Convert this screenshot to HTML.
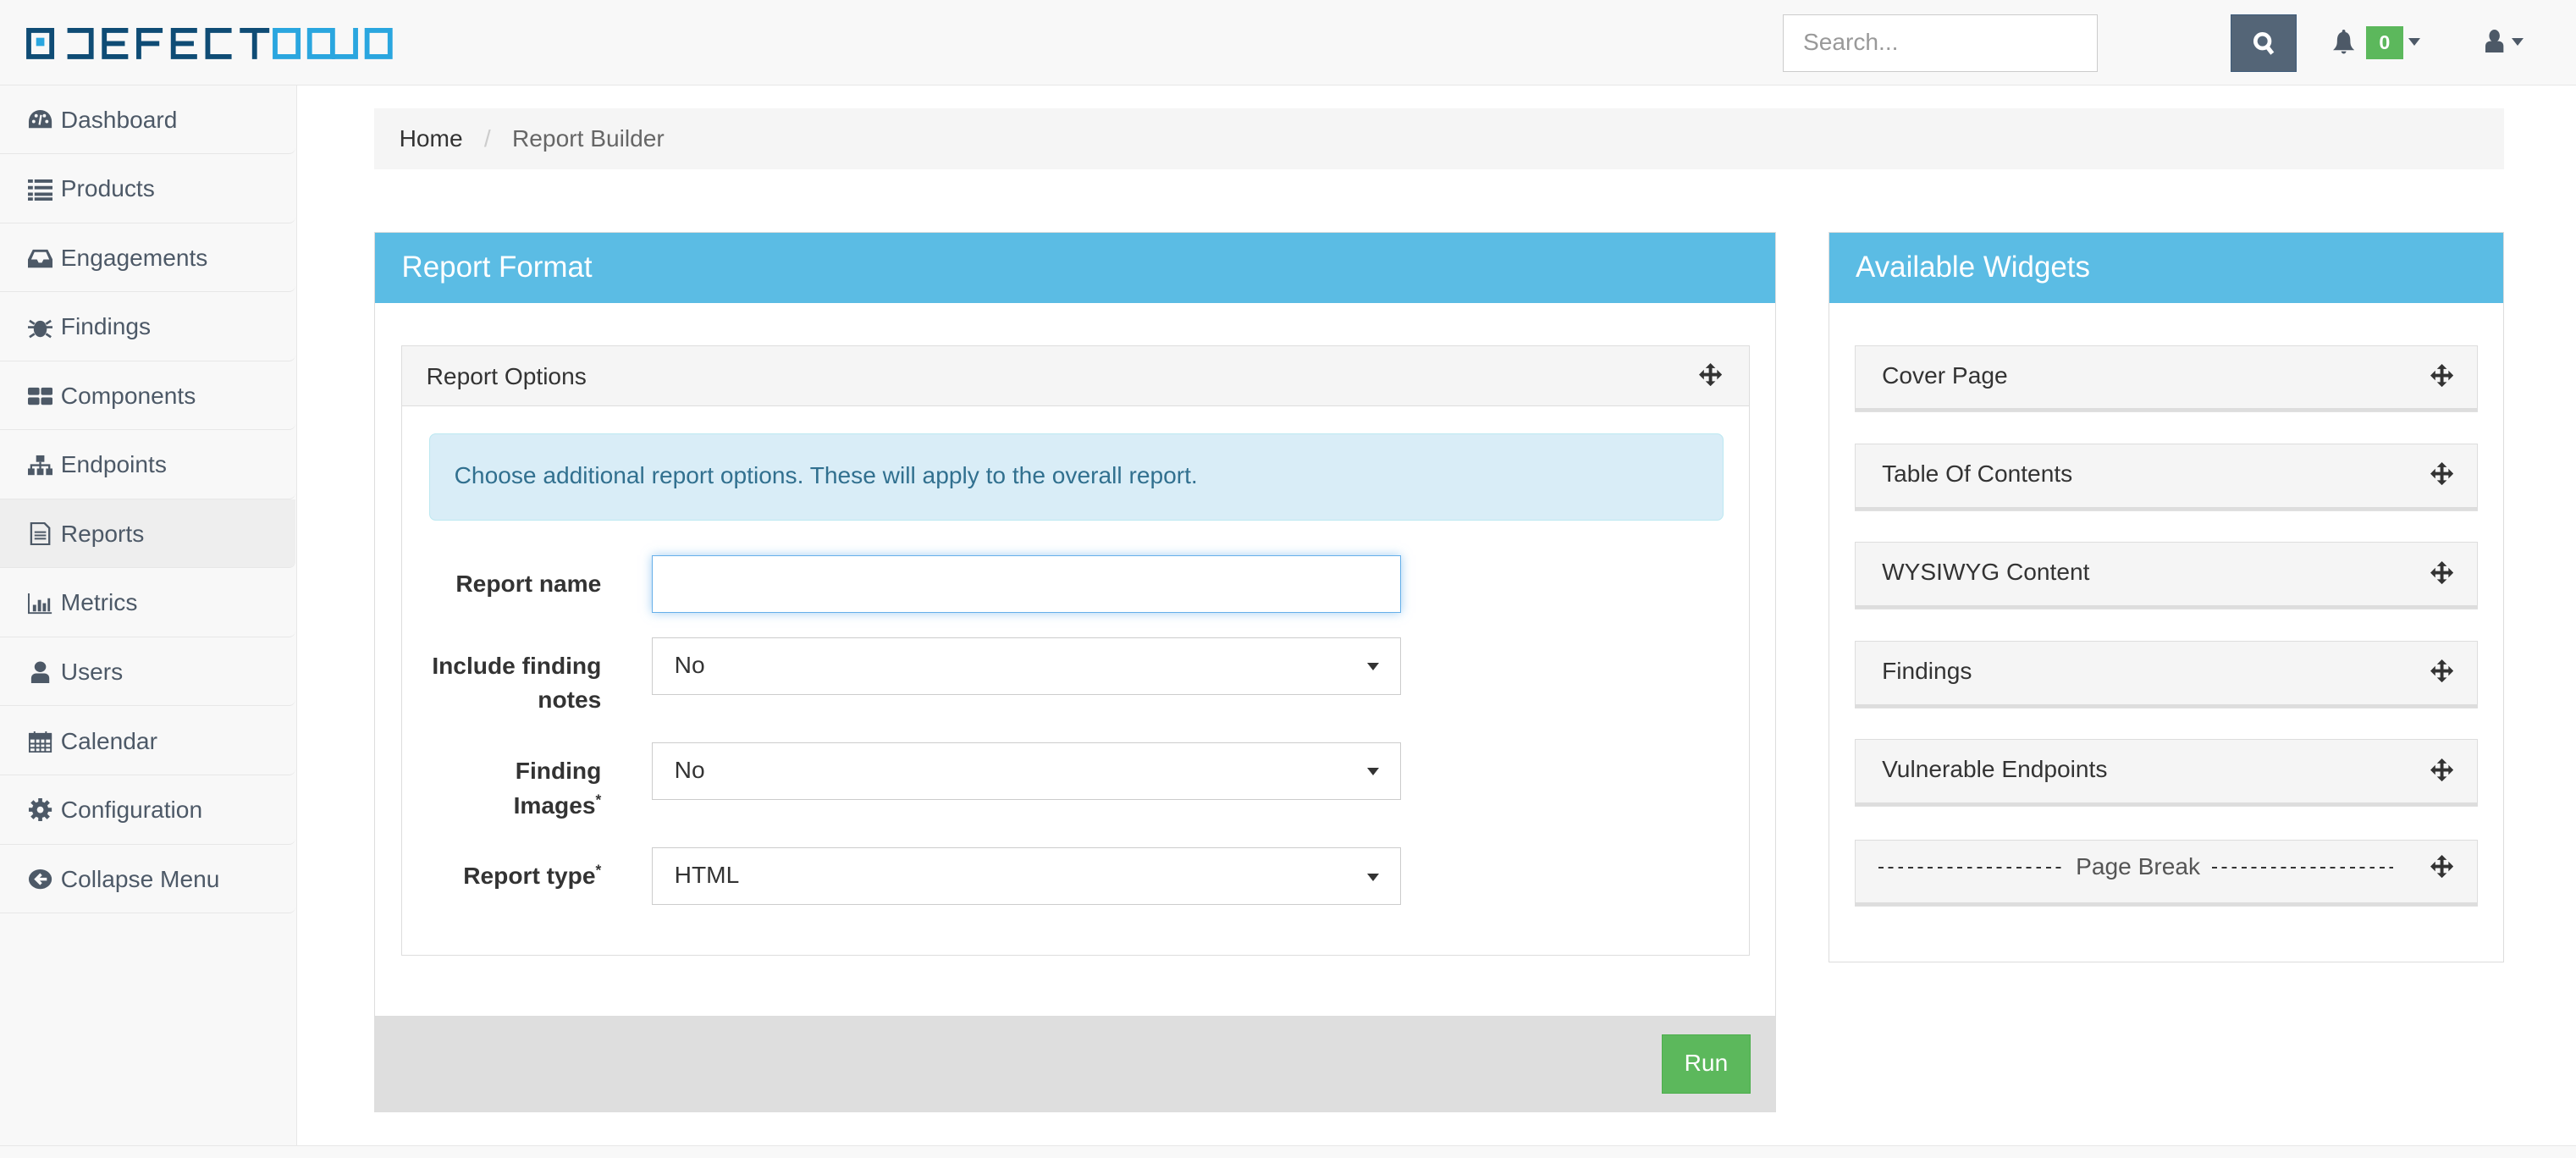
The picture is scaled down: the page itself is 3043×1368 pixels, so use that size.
<!DOCTYPE html>
<html><head><meta charset="utf-8"><style>
html{zoom:1.9407}
*{box-sizing:border-box}
body{margin:0;width:1568px;height:705px;position:relative;overflow:hidden;background:#fff;font-family:"Liberation Sans",sans-serif;font-size:14.5px;color:#333}
.a{position:absolute}
.nav{left:0;top:0;width:1568px;height:52px;background:#f8f8f8;border-bottom:1px solid #e7e7e7}
.side{left:0;top:52px;width:181px;height:645px;background:#f8f8f8;border-right:1px solid #e7e7e7}
.si{position:absolute;left:0;width:180px;height:42px;border-bottom:1px solid #e7e7e7;color:#4d5967;font-size:14.5px;line-height:42px;padding-left:37px;border-radius:0 0 4px 0}
.si svg{position:absolute;left:17px;top:14px;width:15px;height:14px;fill:#4d5967}
.foot{left:0;top:697px;width:1568px;height:8px;background:#f8f8f8;border-top:1px solid #e7e7e7}
.panel{border:1px solid #ddd;background:#fff}
.ph{background:#5bbce4;color:#fff;font-size:18px;height:43px;line-height:42px;padding-left:16px}
.w{position:absolute;left:1129px;width:379px;height:39px;background:#f5f5f5;border:1px solid #ddd;box-shadow:0 2px 0 #ddd;font-size:14.5px;line-height:36px;padding-left:16px;color:#333}
.mv{position:absolute;right:14px;top:11px;width:14px;height:14px}
.lbl{position:absolute;right:1202px;font-weight:bold;font-size:14.5px;text-align:right;line-height:21px;color:#333}
.inp{position:absolute;left:397px;width:456px;height:35px;border:1px solid #ccc;background:#fff;padding-left:13px;line-height:33px;font-size:14.5px}
.car{position:absolute;right:13px;top:15px;border-left:4px solid transparent;border-right:4px solid transparent;border-top:5px solid #333}
sup{font-size:9px;line-height:0}
.dash{position:absolute;top:16px;height:1px;background:repeating-linear-gradient(90deg,#333 0 3px,transparent 3px 6px)}
</style></head><body>
<div class="a nav"></div>
<svg class="a" style="left:16px;top:17px" width="223" height="19" viewBox="0 0 223 19">
<g fill="#0f4c75">
<path d="M0 0h17v19h-17zM3 3v13h11v-13z"/><rect x="6" y="6" width="5" height="5" fill="#2aa6df"/>
<path d="M25 0h16v19h-16v-3h13v-13h-13z"/>
<path d="M46 0h16v3h-13v5h11v3h-11v5h13v3h-16z"/>
<path d="M67 0h16v3h-13v5h11v3h-11v8h-3z"/>
<path d="M88 0h16v3h-13v5h11v3h-11v5h13v3h-16z"/>
<path d="M109 0h16v3h-13v13h13v3h-16z"/>
<path d="M130 0h18v3h-7.5v16h-3v-16h-7.5z"/>
</g><g fill="#2aa6df">
<path d="M150 0h17v19h-17zM153 3v13h11v-13z"/>
<path d="M171 0h17v19h-17zM174 3v13h11v-13z"/>
<path d="M199 0h3v19h-16v-3h13z" />
<path d="M206 0h17v19h-17zM209 3v13h11v-13z"/>
</g></svg>
<div class="a" style="left:1085px;top:9px;width:192px;height:35px;border:1px solid #ccc;background:#fff;color:#999;line-height:33px;padding-left:12px;font-size:14.5px">Search...</div>
<div class="a" style="left:1358px;top:9px;width:40px;height:35px;background:#546577;border:1px solid #3e5b7a"></div>
<svg class="a" style="left:1371px;top:19px" width="14" height="15" viewBox="0 0 14 15"><circle cx="6" cy="6" r="4.3" fill="none" stroke="#fff" stroke-width="2.4"/><path d="M8.5 9l3.5 4.5" stroke="#fff" stroke-width="2.6"/></svg>
<svg class="a" style="left:1420px;top:18px" width="13" height="15" viewBox="0 0 13 15"><path d="M6.5 0c1 0 1 1 1 1.5c2.5 .7 3 3 3 5.5c0 3 1 4 2.5 5.5h-13c1.5-1.5 2.5-2.5 2.5-5.5c0-2.5.5-4.8 3-5.5c0-.5 0-1.5 1-1.5zM5 13.2h3a1.5 1.5 0 0 1-3 0z" fill="#4d5967"/></svg>
<div class="a" style="left:1440px;top:16px;width:23px;height:20px;background:#5cb85c;color:#fff;font-weight:bold;font-size:12px;text-align:center;line-height:20px">0</div>
<div class="a" style="left:1466px;top:23px;border-left:4px solid transparent;border-right:4px solid transparent;border-top:5px solid #4d5967"></div>
<svg class="a" style="left:1513px;top:18px" width="11" height="14" viewBox="0 0 11 14"><ellipse cx="5.5" cy="3.8" rx="3.2" ry="3.8" fill="#4d5967"/><path d="M0 14v-4c0-2 1.5-3 3-3h5c1.5 0 3 1 3 3v4z" fill="#4d5967"/></svg>
<div class="a" style="left:1529px;top:23px;border-left:4px solid transparent;border-right:4px solid transparent;border-top:5px solid #4d5967"></div>

<div class="a side"></div>
<div class="si" style="top:52px"><svg viewBox="0 0 15 14"><path d="M7.5 1a7 7 0 0 0-7 7v4h14v-4a7 7 0 0 0-7-7z"/><circle cx="3.5" cy="8" r="1" fill="#f8f8f8"/><circle cx="11.5" cy="8" r="1" fill="#f8f8f8"/><circle cx="5" cy="4.5" r="1" fill="#f8f8f8"/><circle cx="10" cy="4.5" r="1" fill="#f8f8f8"/><path d="M7 10l1-6" stroke="#f8f8f8" stroke-width="1.2"/></svg>Dashboard</div>
<div class="si" style="top:94px"><svg viewBox="0 0 15 14"><path d="M0 1h3v2h-3zM4 1h11v2h-11zM0 5h3v2h-3zM4 5h11v2h-11zM0 9h3v2h-3zM4 9h11v2h-11zM0 12h3v2h-3zM4 12h11v2h-11z"/></svg>Products</div>
<div class="si" style="top:136px"><svg viewBox="0 0 15 14"><path d="M3 2h9l3 6v5h-15v-5zM4 3.5l-2 4.5h3.5l1 2h2l1-2h3.5l-2-4.5z"/></svg>Engagements</div>
<div class="si" style="top:178px"><svg viewBox="0 0 15 14"><ellipse cx="7.5" cy="8" rx="4" ry="5"/><path d="M0 7h15M1 3l3 2M14 3l-3 2M1 13l3-2M14 13l-3-2" stroke="#4d5967" stroke-width="1.4"/></svg>Findings</div>
<div class="si" style="top:220px"><svg viewBox="0 0 15 14"><rect x="0" y="2" width="7" height="4.5" rx="1"/><rect x="8" y="2" width="7" height="4.5" rx="1"/><rect x="0" y="8" width="7" height="4.5" rx="1"/><rect x="8" y="8" width="7" height="4.5" rx="1"/></svg>Components</div>
<div class="si" style="top:262px"><svg viewBox="0 0 15 14"><rect x="5" y="1" width="5" height="4"/><rect x="0" y="9" width="4" height="4"/><rect x="5.5" y="9" width="4" height="4"/><rect x="11" y="9" width="4" height="4"/><path d="M2 9v-2h11v2M7.5 5v4" stroke="#4d5967" stroke-width="1.2" fill="none"/></svg>Endpoints</div>
<div class="si" style="top:304px;background:#eee"><svg viewBox="0 0 15 14"><path d="M2 .5h8l3 3v10h-11z" fill="none" stroke="#4d5967" stroke-width="1.2"/><path d="M4 6h7M4 8h7M4 10h7" stroke="#4d5967"/></svg>Reports</div>
<div class="si" style="top:346px"><svg viewBox="0 0 15 14"><path d="M.5 1v12h14" fill="none" stroke="#4d5967"/><rect x="3" y="8" width="2" height="4"/><rect x="6" y="5" width="2" height="7"/><rect x="9" y="7" width="2" height="5"/><rect x="12" y="4" width="1.5" height="8"/></svg>Metrics</div>
<div class="si" style="top:388px"><svg viewBox="0 0 15 14"><ellipse cx="7.5" cy="4" rx="3.5" ry="3.2"/><path d="M2 14v-3c0-2 1.5-3 3-3h5c1.5 0 3 1 3 3v3z"/></svg>Users</div>
<div class="si" style="top:430px"><svg viewBox="0 0 15 14"><path d="M1 2.5h13v11h-13z" fill="none" stroke="#4d5967"/><path d="M1 3h13v2.5h-13zM4 1v3M11 1v3M1 8.5h13M1 11h13M4.5 5v8.5M7.5 5v8.5M10.5 5v8.5" stroke="#4d5967"/></svg>Calendar</div>
<div class="si" style="top:472px"><svg viewBox="0 0 15 14"><circle cx="7.5" cy="7" r="5"/><path d="M7.5 0v14M0.5 7h14M2.5 2l10 10M12.5 2l-10 10" stroke="#4d5967" stroke-width="2.4"/><circle cx="7.5" cy="7" r="2" fill="#f8f8f8"/></svg>Configuration</div>
<div class="si" style="top:514px"><svg viewBox="0 0 15 14"><ellipse cx="7.5" cy="7" rx="7" ry="6"/><path d="M11.5 7h-6M8 4l-3 3 3 3" stroke="#f8f8f8" stroke-width="1.8" fill="none"/></svg>Collapse Menu</div>
<div class="a foot"></div>

<div class="a" style="left:228px;top:66px;width:1296px;height:37px;background:#f5f5f5;line-height:37px;padding-left:15px;font-size:14.5px;color:#333">Home <span style="color:#ccc;padding:0 9px">/</span> <span style="color:#666">Report Builder</span></div>

<div class="a panel" style="left:228px;top:141px;width:853px;height:536px">
<div class="ph">Report Format</div>
<div class="a" style="left:-1px;top:477px;width:853px;height:58px;background:#dedede;border-top:1px solid #ddd"></div>
<div class="a" style="left:783px;top:488px;width:54px;height:36px;background:#5cb85c;border:1px solid #4cae4c;color:#fff;text-align:center;line-height:34px;font-size:14.5px">Run</div>
</div>
<div class="a panel" style="left:244px;top:210px;width:821px;height:372px">
<div style="height:37px;background:#f5f5f5;border-bottom:1px solid #ddd;line-height:37px;padding-left:15px;font-size:14.5px">Report Options</div>
</div>
<svg class="mv a" style="left:1034px;top:221px" viewBox="0 0 14 14"><path d="M7 0l3 3h-2v3h3v-2l3 3-3 3v-2h-3v3h2l-3 3-3-3h2v-3h-3v2l-3-3 3-3v2h3v-3h-2z" fill="#333"/></svg>
<div class="a" style="left:261px;top:264px;width:788px;height:53px;background:#d9edf7;border:1px solid #bce8f1;border-radius:4px;color:#31708f;line-height:51px;padding-left:15px;font-size:14.5px">Choose additional report options. These will apply to the overall report.</div>
<div class="lbl" style="top:345px">Report name</div>
<div class="inp" style="top:338px;border-color:#66afe9;box-shadow:0 0 6px rgba(102,175,233,.6)"></div>
<div class="lbl" style="top:395px">Include finding<br>notes</div>
<div class="inp" style="top:388px">No<div class="car"></div></div>
<div class="lbl" style="top:459px">Finding<br>Images<sup>*</sup></div>
<div class="inp" style="top:452px">No<div class="car"></div></div>
<div class="lbl" style="top:523px">Report type<sup>*</sup></div>
<div class="inp" style="top:516px">HTML<div class="car"></div></div>

<div class="a panel" style="left:1113px;top:141px;width:411px;height:445px">
<div class="ph">Available Widgets</div>
</div>
<div class="w" style="top:210px">Cover Page<svg class="mv" viewBox="0 0 14 14"><path d="M7 0l3 3h-2v3h3v-2l3 3-3 3v-2h-3v3h2l-3 3-3-3h2v-3h-3v2l-3-3 3-3v2h3v-3h-2z" fill="#333"/></svg></div>
<div class="w" style="top:270px">Table Of Contents<svg class="mv" viewBox="0 0 14 14"><path d="M7 0l3 3h-2v3h3v-2l3 3-3 3v-2h-3v3h2l-3 3-3-3h2v-3h-3v2l-3-3 3-3v2h3v-3h-2z" fill="#333"/></svg></div>
<div class="w" style="top:330px">WYSIWYG Content<svg class="mv" viewBox="0 0 14 14"><path d="M7 0l3 3h-2v3h3v-2l3 3-3 3v-2h-3v3h2l-3 3-3-3h2v-3h-3v2l-3-3 3-3v2h3v-3h-2z" fill="#333"/></svg></div>
<div class="w" style="top:390px">Findings<svg class="mv" viewBox="0 0 14 14"><path d="M7 0l3 3h-2v3h3v-2l3 3-3 3v-2h-3v3h2l-3 3-3-3h2v-3h-3v2l-3-3 3-3v2h3v-3h-2z" fill="#333"/></svg></div>
<div class="w" style="top:450px">Vulnerable Endpoints<svg class="mv" viewBox="0 0 14 14"><path d="M7 0l3 3h-2v3h3v-2l3 3-3 3v-2h-3v3h2l-3 3-3-3h2v-3h-3v2l-3-3 3-3v2h3v-3h-2z" fill="#333"/></svg></div>
<div class="w" style="top:511px;line-height:32px;padding-left:0;color:#555"><span class="dash" style="left:14px;width:114px"></span><span style="position:absolute;left:134px">Page Break</span><span class="dash" style="left:217px;width:110px"></span><svg class="mv" style="top:9px" viewBox="0 0 14 14"><path d="M7 0l3 3h-2v3h3v-2l3 3-3 3v-2h-3v3h2l-3 3-3-3h2v-3h-3v2l-3-3 3-3v2h3v-3h-2z" fill="#333"/></svg></div>
</body></html>
